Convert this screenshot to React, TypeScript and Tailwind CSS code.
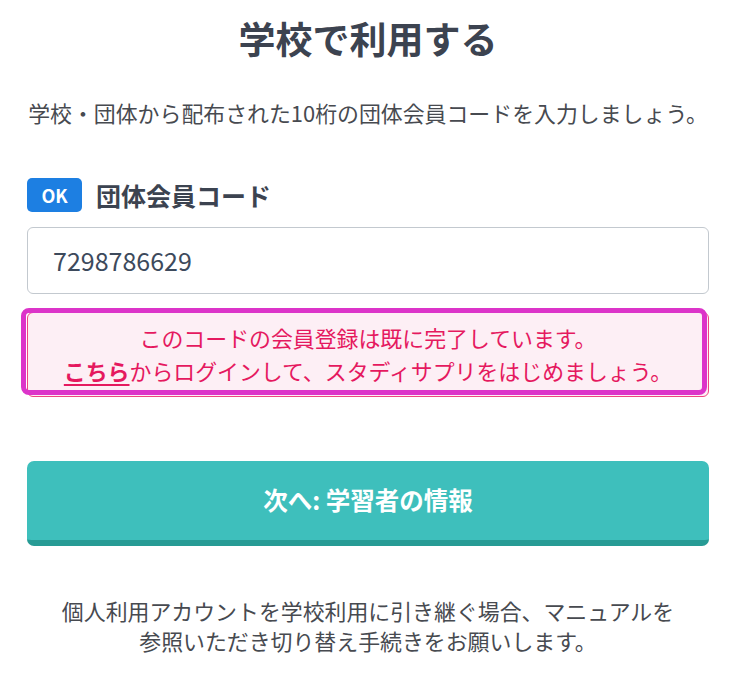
export default function App() {
  return (
    <div
      className="min-h-[689px] w-full bg-white px-[27px] text-[#3d4450]"
      style={{ fontFamily: '"Noto Sans CJK JP", "Noto Sans", sans-serif' }}
    >
      <h1 className="pt-[11px] text-center text-[37px] font-bold leading-[54px] text-[#3c4350]">
        学校で利用する
      </h1>

      <p className="mt-[32px] text-center text-[21.9px] leading-[32px] text-[#474a50]">
        学校・団体から配布された10桁の団体会員コードを入力しましょう。
      </p>

      {/* label */}
      <div className="mt-[49px] flex items-center gap-[14px]">
        <span className="flex h-[34px] w-[55px] items-center justify-center rounded-[5px] bg-[#1d7fe2] text-[18px] font-bold text-white">
          OK
        </span>
        <span className="text-[25px] font-bold leading-none text-[#3c4350]">団体会員コード</span>
      </div>

      {/* input */}
      <div className="mt-[15px] flex h-[67px] items-center rounded-[6px] border border-[#c3c9cf] px-[25px] text-[25px] text-[#3d4a5c]">
        7298786629
      </div>

      {/* error */}
      <div className="relative mt-[18px]">
        <div className="rounded-[6px] border border-[#f0467f] bg-[#fdeff5] pt-[8px] pb-[9px] text-center text-[21.9px] leading-[33px] text-[#e5195f]">
          <p>このコードの会員登録は既に完了しています。</p>
          <p>
            <a href="#" className="font-bold underline decoration-2 underline-offset-4">
              こちら
            </a>
            からログインして、スタディサプリをはじめましょう。
          </p>
        </div>
        <div className="pointer-events-none absolute -top-[4px] -left-[6px] right-[2px] bottom-[2px] rounded-[8px] border-[5px] border-[#dc34c9]" />
      </div>

      {/* button */}
      <button className="mt-[64px] flex h-[85px] w-full items-center justify-center rounded-[7px] border-b-[6px] border-[#279b95] bg-[#3ebfbc] text-[24.5px] font-bold text-white">
        次へ: 学習者の情報
      </button>

      <p className="mt-[50px] text-center text-[21.9px] leading-[30px] text-[#474a50]">
        個人利用アカウントを学校利用に引き継ぐ場合、マニュアルを
        <br />
        参照いただき切り替え手続きをお願いします。
      </p>
    </div>
  );
}
